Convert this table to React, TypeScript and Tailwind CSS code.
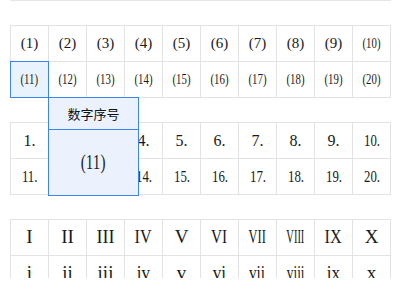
import React from "react";

const serif = "font-['Liberation_Serif','Times_New_Roman',serif] text-[#1a1a1a]";

// parenthesised numbers, two-digit ones squeezed to one-digit width
const parens = Array.from({ length: 20 }, (_, i) => `(${i + 1})`);
const dotted = Array.from({ length: 20 }, (_, i) => `${i + 1}.`);

const upperRoman: [string, string][] = [
  ["I", ""],
  ["II", ""],
  ["III", "[transform:scaleX(0.95)]"],
  ["IV", "[transform:scaleX(0.85)]"],
  ["V", ""],
  ["VI", "[transform:scaleX(0.8)]"],
  ["VII", "[transform:scaleX(0.65)]"],
  ["VIII", "[transform:scaleX(0.55)]"],
  ["IX", "[transform:scaleX(0.85)]"],
  ["X", ""],
];

const lowerRoman: [string, string][] = [
  ["i", ""],
  ["ii", ""],
  ["iii", ""],
  ["iv", "[transform:scaleX(0.9)]"],
  ["v", ""],
  ["vi", "[transform:scaleX(0.9)]"],
  ["vii", "[transform:scaleX(0.8)]"],
  ["viii", "[transform:scaleX(0.7)]"],
  ["ix", "[transform:scaleX(0.9)]"],
  ["x", ""],
];

const Cell = ({
  children,
  selected = false,
}: {
  children: React.ReactNode;
  selected?: boolean;
}) => (
  <div
    className={`relative flex h-9 w-[38px] items-center justify-center border-r border-b border-[#e3e3e3] ${
      selected ? "bg-[#e8f3fd]" : ""
    }`}
  >
    {children}
    {selected && (
      <div className="pointer-events-none absolute -left-px -top-px h-[37px] w-[39px] border border-[#3b86ee]" />
    )}
  </div>
);

const Grid = ({ children }: { children: React.ReactNode }) => (
  <div className="grid w-[381px] grid-cols-10 border-l border-t border-[#e3e3e3]">
    {children}
  </div>
);

export default function App() {
  return (
    <div className="h-[282px] w-[416px] overflow-hidden bg-white">
      <div className="h-[278px] overflow-hidden px-[10px]">
        <div className="w-[381px] border-t border-[#e6e6e6]" />

        <div className="relative mt-6">
          <Grid>
            {parens.map((p, i) => (
              <Cell key={p} selected={i === 10}>
                <span
                  className={`${serif} inline-block text-[15px] ${
                    i >= 9 ? "[transform:scaleX(0.72)]" : ""
                  }`}
                >
                  {p}
                </span>
              </Cell>
            ))}
          </Grid>

          {/* picker popup under the selected cell */}
          <div className="absolute left-[38px] top-[72px] z-10 flex h-[99px] w-[91px] flex-col border border-[#3b86ee] bg-[#ebf2fe]">
            <div className="flex h-[32px] items-center justify-center border-b border-[#3b86ee] font-['Noto_Sans_CJK_SC',sans-serif] text-[13px] text-[#111]">
              数字序号
            </div>
            <div className="flex flex-1 items-center justify-center">
              <span className={`${serif} inline-block text-[21px] [transform:scaleX(0.72)]`}>
                (11)
              </span>
            </div>
          </div>
        </div>

        <div className="mt-6">
          <Grid>
            {dotted.map((d, i) => (
              <Cell key={d}>
                <span
                  className={`${serif} inline-block text-[16px] ${
                    i >= 9 ? "[transform:scaleX(0.8)]" : ""
                  }`}
                >
                  {d}
                </span>
              </Cell>
            ))}
          </Grid>
        </div>

        <div className="mt-6">
          <Grid>
            {upperRoman.map(([r, s]) => (
              <Cell key={r}>
                <span className={`${serif} inline-block text-[19px] ${s}`}>{r}</span>
              </Cell>
            ))}
            {lowerRoman.map(([r, s]) => (
              <Cell key={r}>
                <span className={`${serif} inline-block text-[19px] ${s}`}>{r}</span>
              </Cell>
            ))}
          </Grid>
        </div>
      </div>
    </div>
  );
}
